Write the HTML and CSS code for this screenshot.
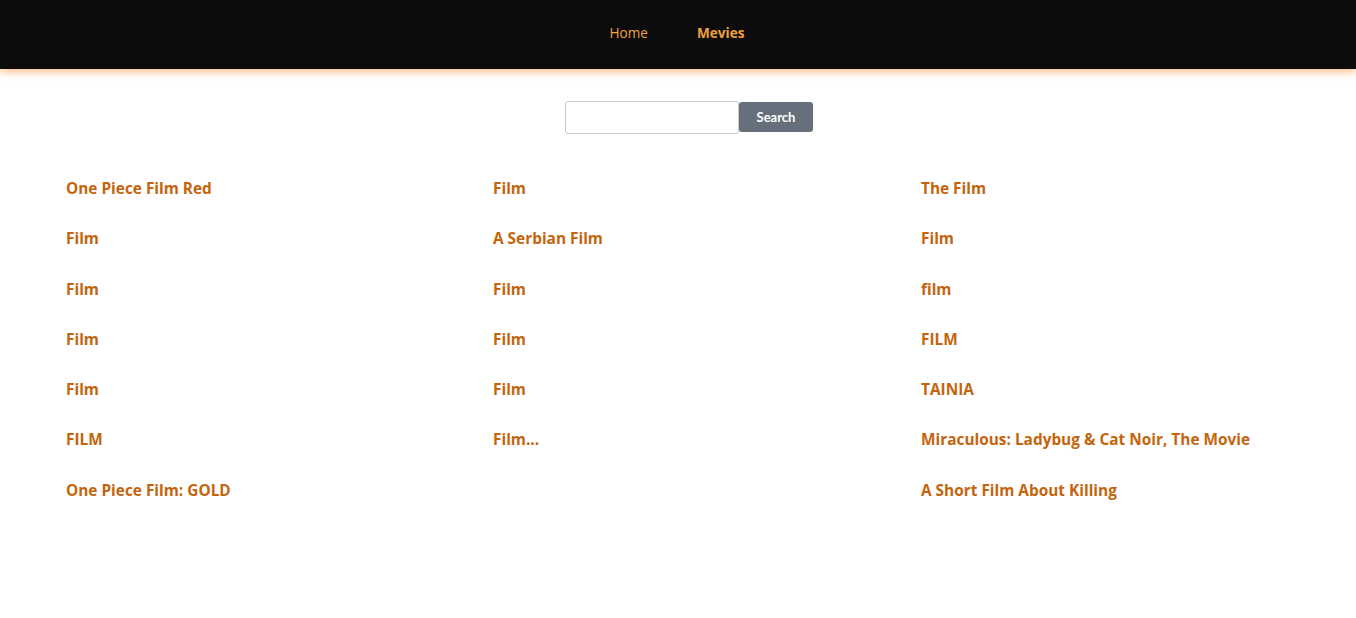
FILE: index.html
```html
<!DOCTYPE html>
<html>
<head>
<meta charset="utf-8">
<link rel="stylesheet" href="styles.css">
</head>
<body>
<header class="topbar">
  <nav class="nav">
    <a class="nav-link" href="#">Home</a>
    <a class="nav-link active" href="#">Mevies</a>
  </nav>
</header>
<main class="page">
  <form class="search">
    <input class="search-input" type="text">
    <button class="search-btn" type="button">Search</button>
  </form>
  <div class="grid">
    <a class="film" href="#">One Piece Film Red</a>
    <a class="film" href="#">Film</a>
    <a class="film" href="#">The Film</a>
    <a class="film" href="#">Film</a>
    <a class="film" href="#">A Serbian Film</a>
    <a class="film" href="#">Film</a>
    <a class="film" href="#">Film</a>
    <a class="film" href="#">Film</a>
    <a class="film" href="#">film</a>
    <a class="film" href="#">Film</a>
    <a class="film" href="#">Film</a>
    <a class="film" href="#">FILM</a>
    <a class="film" href="#">Film</a>
    <a class="film" href="#">Film</a>
    <a class="film" href="#">TAINIA</a>
    <a class="film" href="#">FILM</a>
    <a class="film" href="#">Film...</a>
    <a class="film" href="#">Miraculous: Ladybug &amp; Cat Noir, The Movie</a>
    <a class="film" href="#">One Piece Film: GOLD</a>
    <span class="film empty"></span>
    <a class="film" href="#">A Short Film About Killing</a>
  </div>
</main>
</body>
</html>
```
FILE: styles.css
```css
* { box-sizing: border-box; }
body {
  margin: 0;
  background: #fff;
  font-family: "Open Sans", "DejaVu Sans", sans-serif;
}
.topbar {
  height: 69px;
  background: #0c0c0c;
  box-shadow: 0 2px 9px #ffb27a;
  display: flex;
  justify-content: center;
  align-items: center;
  padding-bottom: 4px;
  position: relative;
}
.nav {
  display: flex;
  gap: 49px;
  margin-left: -2px;
}
.nav-link {
  color: #f0a040;
  text-decoration: none;
  font-size: 13.6px;
}
.nav-link.active { font-weight: 700; }
.page {
  padding: 32px 0 0 66px;
}
.search {
  display: flex;
  justify-content: center;
  align-items: flex-start;
  margin-left: -44px;
}
.search-input {
  width: 174px;
  height: 33px;
  border: 1px solid #c8c8c8;
  border-radius: 3px;
  padding: 0 6px;
  margin: 0;
}
.search-btn {
  width: 74px;
  height: 30px;
  margin: 1px 0 0;
  background: #66707c;
  color: #fff;
  border: none;
  border-radius: 3px;
  font-family: "Lato", sans-serif;
  font-weight: 700;
  font-size: 13px;
}
.grid {
  display: grid;
  grid-template-columns: 427px 428px 428px;
  margin-top: 43px;
}
.film {
  color: #c4650d;
  text-decoration: none;
  font-weight: 700;
  font-size: 15.4px;
  height: 50.3px;
  line-height: 24px;
}
```
